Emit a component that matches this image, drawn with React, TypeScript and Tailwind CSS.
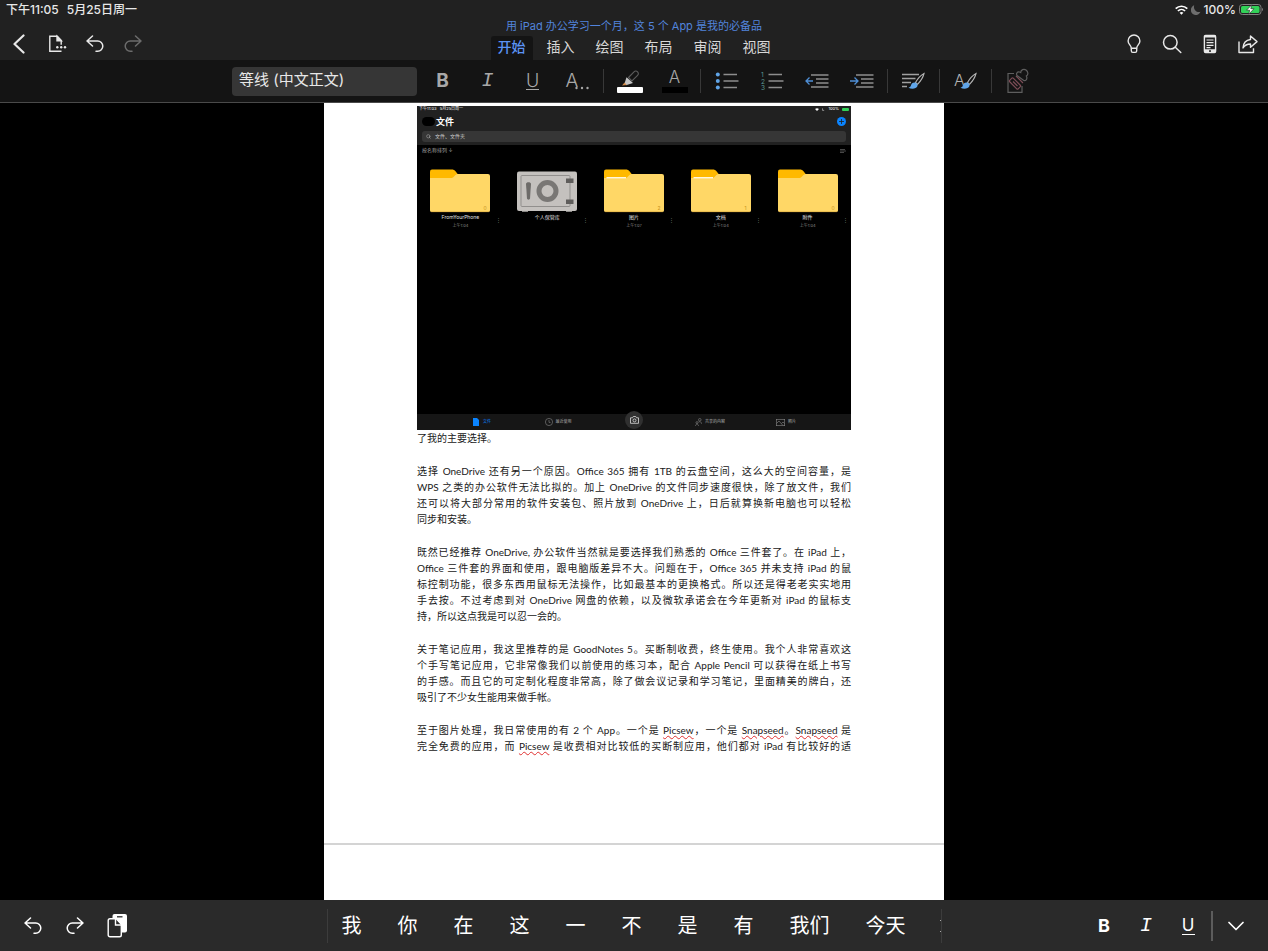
import { useState, type ReactNode } from 'react';
import { ChevronDown, Search } from 'lucide-react';

interface Folder {
  name: string;
  time?: string;
  count?: number;
  hasPaper?: boolean;
  vault?: boolean;
}

const tabs = ['开始', '插入', '绘图', '布局', '审阅', '视图'];

const candidates = ['我', '你', '在', '这', '一', '不', '是', '有', '我们', '今天'];

const folders: Folder[] = [
  { name: 'FromYourPhone', time: '上午1:04', count: 0 },
  { name: '个人保管库', vault: true },
  { name: '图片', time: '上午1:07', count: 2, hasPaper: true },
  { name: '文档', time: '上午1:04', count: 1, hasPaper: true },
  { name: '附件', time: '上午1:04', count: 0 },
];

// Words between * are marked by the spell checker
const paragraphs: string[][] = [
  ['了我的主要选择。'],
  [
    '选择 OneDrive 还有另一个原因。Office 365 拥有 1TB 的云盘空间，这么大的空间容量，是',
    'WPS 之类的办公软件无法比拟的。加上 OneDrive 的文件同步速度很快，除了放文件，我们',
    '还可以将大部分常用的软件安装包、照片放到 OneDrive 上，日后就算换新电脑也可以轻松',
    '同步和安装。',
  ],
  [
    '既然已经推荐 OneDrive, 办公软件当然就是要选择我们熟悉的 Office 三件套了。在 iPad 上，',
    'Office 三件套的界面和使用，跟电脑版差异不大。问题在于，Office 365 并未支持 iPad 的鼠',
    '标控制功能，很多东西用鼠标无法操作，比如最基本的更换格式。所以还是得老老实实地用',
    '手去按。不过考虑到对 OneDrive 网盘的依赖，以及微软承诺会在今年更新对 iPad 的鼠标支',
    '持，所以这点我是可以忍一会的。',
  ],
  [
    '关于笔记应用，我这里推荐的是 GoodNotes 5。买断制收费，终生使用。我个人非常喜欢这',
    '个手写笔记应用，它非常像我们以前使用的练习本，配合 Apple Pencil 可以获得在纸上书写',
    '的手感。而且它的可定制化程度非常高，除了做会议记录和学习笔记，里面精美的牌白，还',
    '吸引了不少女生能用来做手帐。',
  ],
  [
    '至于图片处理，我日常使用的有 2 个 App。一个是 *Picsew*，一个是 *Snapseed*。*Snapseed* 是',
    '完全免费的应用，而 *Picsew* 是收费相对比较低的买断制应用，他们都对 iPad 有比较好的适',
  ],
];

function UndoIcon({ flip = false }: { flip?: boolean }) {
  return (
    <svg
      className={flip ? '-scale-x-100' : ''}
      width="18"
      height="18"
      viewBox="0 0 18 18"
      fill="none"
      stroke="currentColor"
      strokeWidth="1.5"
      strokeLinecap="round"
      strokeLinejoin="round"
    >
      <path d="M6.5 1 1 6l5.5 5M1 6h10.7a5 5 0 0 1 0 10.2H10" />
    </svg>
  );
}

function FileMenuIcon() {
  return (
    <svg width="20" height="20" viewBox="0 0 20 20" fill="none" stroke="currentColor" strokeWidth="1.4">
      <path d="M14.5 17.3H2.8V2.2h7.4l4 4.3v4.2" />
      <path d="M10 2.2v4.6h4.4z" fill="currentColor" />
      <g fill="currentColor" stroke="none">
        <circle cx="10.3" cy="13.2" r="1.2" />
        <circle cx="14.2" cy="13.2" r="1.2" />
        <circle cx="18" cy="13.2" r="1.2" />
      </g>
    </svg>
  );
}

function BulbIcon() {
  return (
    <svg width="20" height="20" viewBox="0 0 20 20" fill="none" stroke="currentColor" strokeWidth="1.4" strokeLinejoin="round">
      <path d="M7.3 14.2c0-3-3.2-3.8-3.2-7.3a5.9 5.9 0 0 1 11.8 0c0 3.5-3.2 4.3-3.2 7.3z" />
      <path d="M7.3 14.2v2.6c0 1 .6 1.6 1.5 1.6h2.4c.9 0 1.5-.6 1.5-1.6v-2.6" />
    </svg>
  );
}

function MobileViewIcon() {
  return (
    <svg width="20" height="20" viewBox="0 0 20 20" fill="none">
      <rect x="4.4" y="1.5" width="11.2" height="17" rx="1.2" stroke="currentColor" strokeWidth="1.4" />
      <path d="M4.4 15.3h11.2v3H4.4zM4.4 1.5h11.2v2H4.4z" fill="currentColor" />
      <path d="M6.5 6h7M6.5 8.7h7M6.5 11.4h7M6.5 13.6h4" stroke="currentColor" strokeWidth="1.2" />
      <rect x="9" y="16.3" width="2" height="1.5" fill="#212121" />
    </svg>
  );
}

function ShareIcon() {
  return (
    <svg width="22" height="20" viewBox="0 0 22 20" fill="none" stroke="currentColor" strokeWidth="1.4" strokeLinejoin="round">
      <path d="M2 7.5v11h14.5v-4.2" />
      <path d="M13.5 2l6.5 5.6-6.5 5.6V10c-3.5 0-5.8 1.2-7.5 4 .3-4.8 3-8 7.5-8.5z" />
    </svg>
  );
}

function HighlighterIcon() {
  return (
    <svg width="28" height="24" viewBox="0 0 28 24" fill="none">
      <path d="M12.5 8.5 18 2.8c1-1 2.6-1 3.6 0s1 2.6 0 3.6l-5.7 5.5z" stroke="#5c5c5c" strokeWidth="1.1" />
      <path d="M10.5 8.3 17 14l-7 2.2-1.5-1.7z" fill="#c4c4c4" />
      <path d="M8.5 13.5 10.8 16 6 16.5z" fill="#d08a4c" />
      <rect x="1" y="18" width="26" height="6" rx="1" fill="#fff" />
    </svg>
  );
}

function ListIcon({ numbered = false }: { numbered?: boolean }) {
  return (
    <svg width="24" height="20" viewBox="0 0 24 20">
      {numbered ? (
        <g fill="#5d9a94" fontSize="6.5" fontFamily="Inter, sans-serif">
          <text x="1" y="5.5">1</text>
          <text x="1" y="12.5">2</text>
          <text x="1" y="19">3</text>
        </g>
      ) : (
        <g fill="#60a5e8">
          <circle cx="2.8" cy="3.5" r="2" />
          <circle cx="2.8" cy="10" r="2" />
          <circle cx="2.8" cy="16.5" r="2" />
        </g>
      )}
      <path d="M8.5 3.5H22M8.5 10H23.5M8.5 16.5H22" stroke="#8d8d8d" strokeWidth="1.3" />
    </svg>
  );
}

function IndentIcon({ out = false }: { out?: boolean }) {
  return (
    <svg width="24" height="20" viewBox="0 0 24 20" fill="none">
      <path d="M6 4h17.5M11 8h12.5M11 12h12.5M6 16h17.5" stroke="#8d8d8d" strokeWidth="1.3" />
      <path
        d={out ? 'M4.5 6.5 1 10l3.5 3.5M1 10h7' : 'M4.5 6.5 8 10l-3.5 3.5M0 10h7.5'}
        stroke="#4f8fd6"
        strokeWidth="1.3"
      />
    </svg>
  );
}

function Brush() {
  return (
    <>
      <path d="M23 3.5c-3 1.7-6.5 5.5-8.5 9l2 1.8c2.8-2.8 5.6-7.2 6.5-10.8z" stroke="#b4b4b4" strokeWidth="1.1" />
      <path d="M14 12.5c-2.3-.2-3.6 1-4 2.8-.2 1.3-1 2-2.5 2.5 3.2 1.7 7.8 1.2 9-1.7.4-1.4-.5-3-2.5-3.6z" fill="#60a5e8" />
    </>
  );
}

function ParagraphFormatIcon() {
  return (
    <svg width="26" height="22" viewBox="0 0 26 22" fill="none">
      <path d="M1 4.5h17M1 8.5h13.5M1 12.5h9M1 16.5h5" stroke="#a0a0a0" strokeWidth="1.3" />
      <Brush />
    </svg>
  );
}

function StylesIcon() {
  return (
    <svg width="26" height="22" viewBox="0 0 26 22" fill="none">
      <text x="1" y="16" fill="#b4b4b4" fontSize="16" fontFamily="Inter, sans-serif" fontWeight="300">A</text>
      <Brush />
    </svg>
  );
}

function StampIcon() {
  return (
    <svg width="24" height="26" viewBox="0 0 24 26" fill="none" stroke="#5e5e5e" strokeWidth="1.2">
      <path d="M8 5.5H2v18.8h14V18" />
      <g stroke="#7d4d57">
        <rect x="3" y="13" width="12" height="5" rx="1" transform="rotate(45 9 15.5)" />
        <path d="M7 13.5l4.5 4.5M10 8l7 7" />
      </g>
      <path d="M11 7.5c-1.2-2 .2-4 2.5-3.5l1.2.6C14.8 1.5 18 .5 20 2s2.8 4.4.3 6l.5 1.2c.4 2.3-1 3.8-3 3.3z" />
    </svg>
  );
}

function PasteIcon() {
  return (
    <svg width="20" height="24" viewBox="0 0 20 24" fill="none">
      <rect x="5.5" y="0" width="14.5" height="18.5" rx="2" fill="#fff" />
      <path d="M10 2.8h5.5" stroke="#2a2a2a" strokeWidth="1.3" />
      <path d="M3 4.8h6.3l5 5.5V21c0 1-.8 1.8-1.8 1.8H3c-1 0-1.8-.8-1.8-1.8V6.6C1.2 5.6 2 4.8 3 4.8z" fill="#2a2a2a" stroke="#fff" strokeWidth="1.4" />
      <path d="M8.5 5v6h6" stroke="#fff" strokeWidth="1.4" />
    </svg>
  );
}

function WifiIcon() {
  return (
    <svg width="13" height="10" viewBox="0 0 13 10" fill="none" stroke="#fff" strokeWidth="1.7">
      <path d="M.7 3.7c3.3-3.3 8.3-3.3 11.6 0M2.9 6c2-2 5.2-2 7.2 0" />
      <path d="M6.5 9.7 4.6 7.7c1-1 2.8-1 3.8 0z" fill="#fff" stroke="none" />
    </svg>
  );
}

function BatteryIcon() {
  return (
    <svg width="25" height="11" viewBox="0 0 25 11">
      <rect x=".5" y=".5" width="21.5" height="10" rx="2.8" fill="none" stroke="#808080" />
      <rect x="2" y="2" width="18.5" height="7" rx="1.5" fill="#32d158" />
      <path d="M23 4c1.3.4 1.3 2.6 0 3z" fill="#808080" />
      <path d="M12.8.8 7.5 6.2h3.2l-1 4 5.3-5.5h-3.2z" fill="#fff" stroke="#212121" strokeWidth=".6" />
    </svg>
  );
}

function FolderIcon({ hasPaper, count }: Folder) {
  return (
    <svg width="60" height="44" viewBox="0 0 60 44">
      <path d="M0 2.5Q0 .5 2 .5h19.5c2 0 3 .6 4.2 2L28 5.5 22 12H0z" fill="#ffb900" />
      <path d="M0 9h20.5c1.5 0 2.5-.4 3.5-1.5l1.2-1.2c.9-1 2-1.3 3-1.3H58q2 0 2 2v34.5q0 1.5-2 1.5H2q-2 0-2-1.5z" fill="#ffd766" />
      {hasPaper && <path d="M2.5 8.7h19.5" stroke="#fff7e0" strokeWidth="1.4" />}
      <path d="M1 42.7h58" stroke="#d9a63a" strokeWidth=".6" />
      <text x="53.5" y="41" fontSize="5" fill="#c99420" fontFamily="Inter, sans-serif">{count}</text>
    </svg>
  );
}

function VaultIcon() {
  return (
    <svg width="60" height="44" viewBox="0 0 60 44">
      <path d="M5 41h6v2H5zM49 41h6v2h-6z" fill="#8a8886" />
      <rect x="0" y="2.5" width="60" height="39.5" rx="2" fill="#c4c1be" />
      <rect x="4" y="6.5" width="49" height="31" rx="1" fill="none" stroke="#918f8d" />
      <path d="M9 15c0-2.5 5-2.5 5 0l-1 14.5c-.3 1.5-2.7 1.5-3 0z" fill="#6d6b69" />
      <circle cx="30.5" cy="22" r="8.5" fill="none" stroke="#797775" strokeWidth="5" />
      <path d="M49 9.5h7.5v4.5H49zM49 30.5h7.5V35H49z" fill="#5f5d5b" />
    </svg>
  );
}

function OneDriveScreenshot() {
  return (
    <figure className="flex aspect-[434/324] flex-col bg-black text-white">
      <div className="bg-[#212121] px-[5px] pb-[3px]">
        <div className="-mx-[3px] flex justify-between text-[4px] leading-[6px]">
          <span>下午11:03&nbsp;&nbsp; 5月25日周一</span>
          <span className="flex items-center gap-[3px]">
            <svg width="4" height="3" viewBox="0 0 13 10"><path d="M0 3.5c4-4 9-4 13 0L6.5 10z" fill="#fff" /></svg>
            <svg width="3" height="3" viewBox="0 0 10 10"><path d="M3 0a5 5 0 1 0 6 7C5 8 2 4 3 0z" fill="#888" /></svg>
            <span>100%</span>
            <span className="h-[3px] w-[7px] rounded-[1px] bg-[#32d158]" />
          </span>
        </div>
        <div className="flex h-[19px] items-center">
          <span className="h-[9px] w-[13px] rounded-full bg-black" />
          <span className="ml-px text-[9px] font-bold">文件</span>
          <span className="ml-auto flex size-[9px] items-center justify-center rounded-full bg-[#0a84ff]">
            <svg width="5" height="5" viewBox="0 0 5 5"><path d="M2.5 0v5M0 2.5h5" stroke="#212121" strokeWidth=".8" /></svg>
          </span>
        </div>
        <div className="flex h-[11px] items-center gap-[4px] rounded-[3px] bg-[#363636] px-[4px] text-[5px] text-[#ccc]">
          <Search size={5} />
          <span>文件、文件夹</span>
        </div>
      </div>
      <div className="flex h-[12px] items-center justify-between px-[5px] text-[5px] text-[#a0a0a0]">
        <span>按名称排列 ↓</span>
        <svg width="6" height="4" viewBox="0 0 6 4"><path d="M0 .5h5M0 2h6M0 3.5h4" stroke="#777" strokeWidth=".6" /></svg>
      </div>
      <div className="grid flex-1 grid-cols-5 content-start pt-[12px]">
        {folders.map((folder) => (
          <div key={folder.name} className="relative flex flex-col items-center">
            {folder.vault ? <VaultIcon /> : <FolderIcon {...folder} />}
            <span className="text-[5px] leading-[9px] text-[#e0e0e0]">{folder.name}</span>
            <span className="text-[4px] leading-[7px] text-[#8a8a8a]">{folder.time}</span>
            <span className="absolute right-[3px] bottom-[4px] text-[5px] leading-[9px] text-[#777]">⋮</span>
          </div>
        ))}
      </div>
      <div className="grid h-[16px] grid-cols-5 items-center bg-[#161616] px-[27px] text-[4px] text-[#b0b0b0]">
        <span className="flex items-center justify-center gap-[4px] text-[#0a84ff]">
          <svg width="6" height="8" viewBox="0 0 6 8"><path d="M0 0h4l2 2v6H0z" fill="#0a84ff" /></svg>
          文件
        </span>
        <span className="flex items-center justify-center gap-[3px]">
          <svg width="8" height="8" viewBox="0 0 8 8" fill="none" stroke="#888" strokeWidth=".6"><circle cx="4" cy="4" r="3.6" /><path d="M4 2v2.4h1.5" /></svg>
          最近使用
        </span>
        <span className="-mt-[5px] flex size-[18px] items-center justify-center justify-self-center rounded-full bg-[#303030]">
          <svg width="9" height="8" viewBox="0 0 9 8" fill="none" stroke="#ddd" strokeWidth=".8"><path d="M.5 1.8h2l.8-1.3h2.4l.8 1.3h2v5.5h-8z" /><circle cx="4.5" cy="4.4" r="1.5" /></svg>
        </span>
        <span className="flex items-center justify-center gap-[3px]">
          <svg width="7" height="8" viewBox="0 0 7 8" fill="none" stroke="#888" strokeWidth=".6"><circle cx="4.8" cy="1.8" r="1.3" /><circle cx="2" cy="4.6" r="1" /><path d="M.5 8c0-2.5 3-2.5 3 0M3.5 4c1.5-.8 3 0 3 1.8" /></svg>
          共享的内容
        </span>
        <span className="flex items-center justify-center gap-[3px]">
          <svg width="9" height="7" viewBox="0 0 9 7" fill="none" stroke="#888" strokeWidth=".6"><rect x=".3" y=".3" width="8.4" height="6.4" /><path d="M.5 4.5 3 2l4 4.5M5.5 4.5 7 3l1.5 1.5" /></svg>
          照片
        </span>
      </div>
    </figure>
  );
}

function Line({ text, justify }: { text: string; justify: boolean }) {
  return (
    <span className={`block whitespace-nowrap ${justify ? 'text-justify [text-align-last:justify]' : ''}`}>
      {text.split('*').map((part, i) =>
        i % 2 === 1 ? (
          <span key={i} className="underline decoration-[#e03030] decoration-wavy decoration-1 underline-offset-1">
            {part}
          </span>
        ) : (
          part
        )
      )}
    </span>
  );
}

function ToolButton({ label, children }: { label: string; children: ReactNode }) {
  return (
    <button aria-label={label} className="flex h-[42px] w-[45px] items-center justify-center text-[#a8a8a8]">
      {children}
    </button>
  );
}

function Separator() {
  return <div className="mx-[3px] h-6 w-px bg-[#383838]" />;
}

export default function App() {
  const [activeTab, setActiveTab] = useState('开始');

  return (
    <div className="flex h-screen flex-col overflow-hidden bg-black font-['Inter','Noto_Sans_CJK_SC',sans-serif] text-white">
      {/* Header */}
      <header className="grid grid-cols-[1fr_auto_1fr] bg-[#212121] text-[#e8e8e8]">
        <div>
          <div className="flex h-[19px] items-center gap-2 pl-[6px] text-[12px] font-medium">
            <span>下午11:05</span>
            <span>5月25日周一</span>
          </div>
          <div className="mt-[9px] flex h-8 items-center">
            <button aria-label="返回" className="flex w-[38px] justify-center">
              <svg width="12" height="20" viewBox="0 0 12 20" fill="none" stroke="currentColor" strokeWidth="2.2" strokeLinecap="round" strokeLinejoin="round"><path d="M10.5 1.5 1.5 10l9 8.5" /></svg>
            </button>
            <button aria-label="文件" className="flex w-[38px] justify-center"><FileMenuIcon /></button>
            <button aria-label="撤消" className="flex w-[38px] justify-center"><UndoIcon /></button>
            <button aria-label="恢复" className="flex w-[38px] justify-center text-[#6c6c6c]"><UndoIcon flip /></button>
          </div>
        </div>

        <div className="flex flex-col items-center pt-[19px]">
          <h1 className="text-[11px] leading-[15px] text-[#5284dc]">用 iPad 办公学习一个月，这 5 个 App 是我的必备品</h1>
          <nav className="mt-[2px] flex gap-[7px]">
            {tabs.map((tab) => (
              <button
                key={tab}
                onClick={() => setActiveTab(tab)}
                className={`h-[24px] rounded-t-[3px] px-[7px] pb-[2px] text-[14px] leading-[20px] ${
                  tab === activeTab ? 'bg-[#141414] font-medium text-[#5b93f5]' : 'text-[#d8d8d8]'
                }`}
              >
                {tab}
              </button>
            ))}
          </nav>
        </div>

        <div>
          <div className="flex h-[19px] items-center justify-end gap-[3px] pr-[4px] text-[12px] font-medium">
            <WifiIcon />
            <svg width="10" height="10" viewBox="0 0 10 10"><path d="M3.2.3a5 5 0 1 0 6.3 6.5C5.5 8 2 4.5 3.2.3z" fill="#6e6e6e" /></svg>
            <span>100%</span>
            <BatteryIcon />
          </div>
          <div className="mt-[9px] flex h-8 items-center justify-end pr-px">
            <button aria-label="操作说明" className="flex w-[38px] justify-center"><BulbIcon /></button>
            <button aria-label="搜索" className="flex w-[38px] justify-center">
              <svg width="20" height="20" viewBox="0 0 20 20" fill="none" stroke="currentColor" strokeWidth="1.5" strokeLinecap="round"><circle cx="8.3" cy="8.3" r="6.8" /><path d="m13.3 13.3 5.5 5.2" /></svg>
            </button>
            <button aria-label="移动视图" className="flex w-[38px] justify-center"><MobileViewIcon /></button>
            <button aria-label="共享" className="flex w-[38px] justify-center"><ShareIcon /></button>
          </div>
        </div>
      </header>

      {/* Ribbon */}
      <div className="flex items-center justify-center border-b border-[#4a4a4a] bg-[#141414] pl-1">
        <select aria-label="字体" className="mr-[3px] h-[29px] w-[185px] appearance-none rounded-[4px] bg-[#363636] px-[7px] pb-[2px] text-[15px] text-[#e8e8e8]">
          <option>等线 (中文正文)</option>
        </select>
        <ToolButton label="加粗"><span className="text-[19px] font-bold">B</span></ToolButton>
        <ToolButton label="倾斜"><span className="font-['Liberation_Mono',monospace] text-[20px] italic">I</span></ToolButton>
        <ToolButton label="下划线"><span className="w-[13px] border-b border-current text-center text-[18px] leading-[17px] font-light">U</span></ToolButton>
        <ToolButton label="字体格式">
          <span className="text-[19px] font-light">A</span>
          <svg className="-ml-[3px] mt-[13px] shrink-0" width="14" height="4" viewBox="0 0 14 4" fill="currentColor">
            <circle cx="1.5" cy="2" r="1.2" /><circle cx="7" cy="2" r="1.2" /><circle cx="12.5" cy="2" r="1.2" />
          </svg>
        </ToolButton>
        <Separator />
        <ToolButton label="突出显示"><HighlighterIcon /></ToolButton>
        <ToolButton label="字体颜色">
          <span className="flex flex-col items-center">
            <span className="text-[17px] leading-[17px] font-light">A</span>
            <span className="mt-px h-[6px] w-[26px] bg-black" />
          </span>
        </ToolButton>
        <Separator />
        <ToolButton label="项目符号"><ListIcon /></ToolButton>
        <ToolButton label="编号"><ListIcon numbered /></ToolButton>
        <ToolButton label="减少缩进"><IndentIcon out /></ToolButton>
        <ToolButton label="增加缩进"><IndentIcon /></ToolButton>
        <Separator />
        <ToolButton label="段落格式"><ParagraphFormatIcon /></ToolButton>
        <Separator />
        <ToolButton label="样式"><StylesIcon /></ToolButton>
        <Separator />
        <ToolButton label="清除格式"><StampIcon /></ToolButton>
      </div>

      {/* Document */}
      <main className="mx-auto flex min-h-0 w-full max-w-[620px] flex-1 flex-col overflow-hidden bg-white text-[#202020]">
        <article className="border-b-2 border-[#d4d4d4] px-[93px] pt-[3px] pb-[89px]">
          <OneDriveScreenshot />
          <div className="flex flex-col gap-[17px] font-['Lato','Noto_Sans_CJK_SC',sans-serif] text-[10px] leading-4">
            {paragraphs.map((lines, i) => (
              <p key={i}>
                {lines.map((line, j) => (
                  <Line key={j} text={line} justify={j < lines.length - 1 || i === paragraphs.length - 1} />
                ))}
              </p>
            ))}
          </div>
        </article>
      </main>

      {/* Keyboard bar */}
      <footer className="grid h-[51px] grid-cols-[1fr_615px_1fr] items-center bg-[#2a2a2a]">
        <div className="flex items-center pl-[12px]">
          <button aria-label="撤消" className="flex w-[42px] justify-center"><UndoIcon /></button>
          <button aria-label="恢复" className="flex w-[42px] justify-center"><UndoIcon flip /></button>
          <button aria-label="粘贴" className="flex w-[42px] justify-center"><PasteIcon /></button>
        </div>
        <div className="flex h-[34px] items-center gap-9 border-x border-[#3c3c3c] pl-[14px] text-[20px]">
          {candidates.map((word) => (
            <button key={word} className="shrink-0">{word}</button>
          ))}
          <span className="-ml-2 flex flex-1 flex-col items-end gap-[10px]">
            <span className="size-px bg-[#aaa]" />
            <span className="size-px bg-[#aaa]" />
          </span>
        </div>
        <div className="flex items-center justify-end pr-[11px]">
          <button aria-label="加粗" className="w-[42px] text-[18px] font-bold">B</button>
          <button aria-label="倾斜" className="w-[42px] font-['Liberation_Mono',monospace] text-[20px] italic">I</button>
          <button aria-label="下划线" className="flex w-[42px] justify-center">
            <span className="w-[13px] border-b border-current text-center text-[17px] leading-[17px]">U</span>
          </button>
          <div className="mx-[2px] h-[30px] w-[2px] bg-[#5c5c5c]" />
          <button aria-label="收起键盘" className="flex w-[42px] justify-center"><ChevronDown size={28} strokeWidth={1.5} /></button>
        </div>
      </footer>
    </div>
  );
}
